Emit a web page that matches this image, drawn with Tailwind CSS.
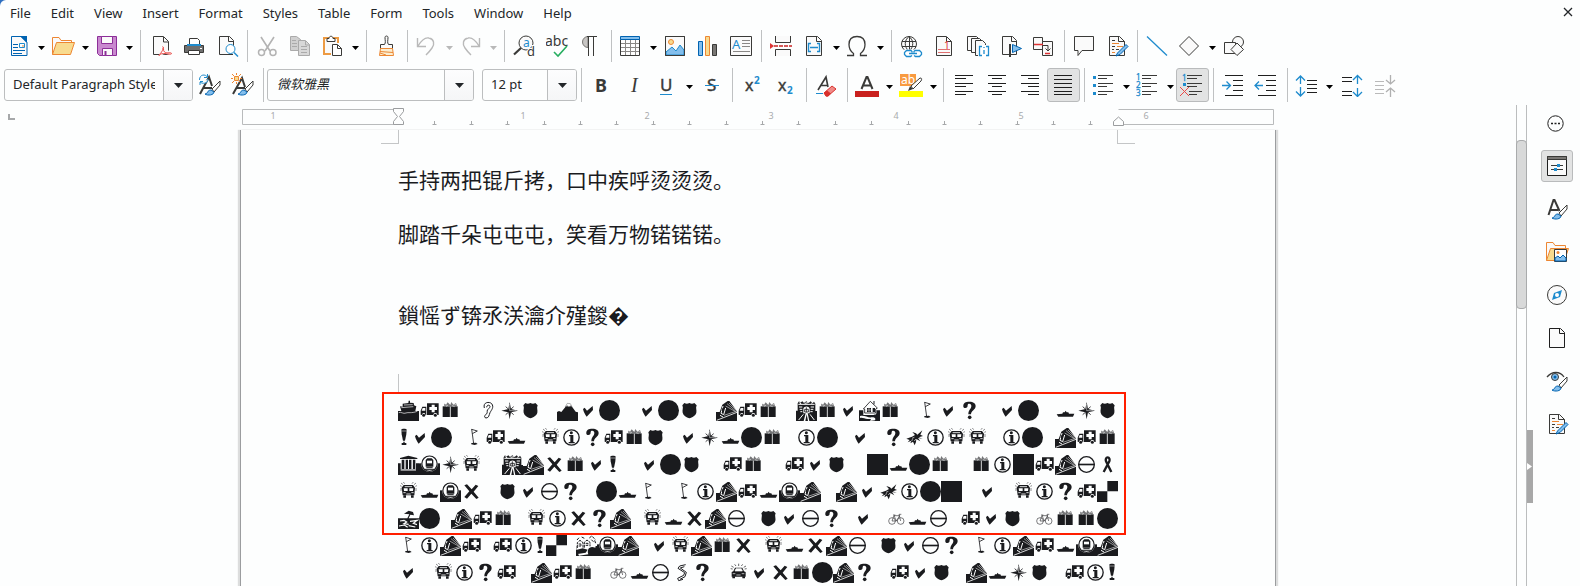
<!DOCTYPE html>
<html lang="en">
<head>
<meta charset="utf-8">
<title>Writer document</title>
<script src="https://cdn.jsdelivr.net/npm/@tailwindcss/browser@4"></script>
</head>
<body class="bg-[#2f6fc0] font-['Noto_Sans','Noto_Sans_CJK_SC',sans-serif] text-[13px] text-[#232629]">

<svg class="hidden" aria-hidden="true">
  <!-- toolbar icons, 24 x 24 -->
  <g fill="none" stroke="#3a3a38">
  <symbol id="i-new" viewBox="0 0 24 24"><path d="M4.500 2.500H14l6 6v13H4.500z" fill="#fafafa" stroke="#0063b1"/><path d="M13 2h7v7z" fill="#0063b1"/><path d="M6 10.500h5M6 13.500h5M6 16.500h12M6 19.500h9" stroke="#0063b1"/><path d="M12.500 9.500h5v4h-5z" fill="#fff" stroke="#1e8bcd"/><path d="M15 12h2" stroke="#ed8733"/></symbol>
  <symbol id="i-open" viewBox="0 0 24 24"><path d="M1.500 20.500V3.500H8l2 3h10.500v3" fill="#fafafa" stroke="#ed8733"/><path d="M5.500 8.500h18l-4 12h-18z" fill="#f8db8f" stroke="#ed8733"/></symbol>
  <symbol id="i-save" viewBox="0 0 24 24"><path d="M2.500 2.500h19v19h-17l-2-2z" fill="#c989cf" stroke="#8c2f98"/><path d="M6.500 2.500h11v7h-11zM7.500 14.500h10v7h-10z" fill="#fafafa" stroke="#8c2f98"/><path d="M10.500 17v4" stroke="#8c2f98" stroke-width="2"/></symbol>
  <symbol id="i-pdf" viewBox="0 0 24 24"><path d="M4.500 2.500h10l5 5v13H4.500z" fill="#fafafa" stroke="#3a3a38"/><path d="M14.500 3v5h5" stroke="#3a3a38" fill="none"/><path d="M13 12v2l2 4 7 1.500M14.500 17L11 22M13 19l7-1" stroke="#fff" stroke-width="3" fill="none"/><path d="M13.500 12.500c2 0 0 4 2 5.500s7 0 7 1.500-4 0-8 0-4 3-4.500 2 4-3 4-8" stroke="#e94a47" fill="none"/></symbol>
  <symbol id="i-print" viewBox="0 0 24 24"><path d="M2.500 11.500h19v7h-19z" fill="#6f6f6e" stroke="#3a3a38"/><path d="M7.500 4.500h8l2 2v5h-10z" fill="#fff" stroke="#3a3a38"/><path d="M5 11h14" stroke="#1e8bcd" stroke-width="2"/><path d="M6.500 16.500h11v4h-11z" fill="#fff" stroke="#3a3a38"/><path d="M18 14.500h2" stroke="#fff"/></symbol>
  <symbol id="i-preview" viewBox="0 0 24 24"><path d="M18 20.500H4.500v-18h10l4 4V12" fill="#fafafa" stroke="#3a3a38"/><path d="M13.500 3v4.500h5" stroke="#3a3a38" fill="none"/><circle cx="15.500" cy="15" r="4.500" fill="#fff" stroke="#1e8bcd"/><path d="M19 18.500l4 4" stroke="#1e8bcd" stroke-width="1.500"/></symbol>
  <symbol id="i-cut" viewBox="0 0 24 24"><path d="M6 3l9 14M19 3l-9 14" stroke="#b3b3b3" stroke-width="1.600"/><circle cx="6.500" cy="18.500" r="3" fill="none" stroke="#b3b3b3" stroke-width="1.500"/><circle cx="18" cy="18.500" r="3" fill="none" stroke="#b3b3b3" stroke-width="1.500"/></symbol>
  <symbol id="i-copy" viewBox="0 0 24 24"><path d="M2.500 2.500h6l4 3v11h-10z" fill="#d0d0d0" stroke="#aaa"/><path d="M10.500 6.500h7l4 4v11h-11z" fill="#d8d8d8" stroke="#aaa"/><path d="M4 6.500h4M4 9.500h5M4 12.500h5M13 12.500h6M13 15.500h6M13 18.500h6M17.500 7v4h4" stroke="#aaa" fill="none"/></symbol>
  <symbol id="i-paste" viewBox="0 0 24 24"><path d="M10 20H3V4h14v5" fill="#fafafa" stroke="#ed9b43" stroke-width="2"/><path d="M6 4.500h2c0-3 4-3 4 0h2v3H6z" fill="#fff" stroke="#3a3a38"/><path d="M11.500 10.500h5l4 4v7h-9z" fill="#fff" stroke="#3a3a38"/><path d="M16.500 11v3.500h4" stroke="#3a3a38" fill="none"/></symbol>
  <symbol id="i-brush" viewBox="0 0 24 24"><path d="M9.500 10.500c1.500-2 .5-4 .5-7 0-2 3-2 3 0 0 3-1 5 .5 7h4v4h-12v-4z" fill="#fafafa" stroke="#3a3a38"/><path d="M5.500 14.500h12l1 7h-14z" fill="#fbeed0" stroke="#ed8733"/><path d="M5 17.500l13 1M5 19l6 2" stroke="#ed8733"/></symbol>
  <symbol id="i-undo" viewBox="0 0 24 24"><path d="M2.500 4v8.500H11M3 12c3-5 7-9 11-8 5 1 6 6 3 10-2 3-4 5-6 7" stroke="#b9b9b9" stroke-width="1.400" fill="none"/></symbol>
  <symbol id="i-redo" viewBox="0 0 24 24"><path d="M20.500 4v8.500H12M20 12c-3-5-7-9-11-8-5 1-6 6-3 10 2 3 4 5 6 7" stroke="#b9b9b9" stroke-width="1.400" fill="none"/></symbol>
  <symbol id="i-find" viewBox="0 0 24 24"><circle cx="13" cy="9" r="7" fill="#fafafa" stroke="#3a3a38"/><path d="M8 14l-7 6.500" stroke="#3a3a38" stroke-width="2.200"/><text x="10" y="13" font-size="12" fill="#1e8bcd" stroke="none">a</text><text x="14" y="22" font-size="13" fill="#3a3a38" stroke="#fff" stroke-width="2" paint-order="stroke">d</text></symbol>
  <symbol id="i-spell" viewBox="0 0 24 24"><text x="-1" y="12" font-size="14" fill="#3a3a38" stroke="none">abc</text><path d="M8 18l4 4 9-10" stroke="#27ae60" stroke-width="1.600" fill="none"/></symbol>
  <symbol id="i-pilcrow" viewBox="0 0 24 24"><path d="M9 2.500a5 5 0 0 0 0 11z" fill="#c8c6c4" stroke="#797774"/><path d="M8 2.500h10M9.500 2v20M14.500 2v20" stroke="#3a3a38" fill="none"/></symbol>
  <symbol id="i-table" viewBox="0 0 24 24"><path d="M1.500 5.500h19v16h-19z" fill="#fff" stroke="#3a3a38"/><path d="M2 9.500h18M2 13.500h18M2 17.500h18M6.500 6v15M11.500 6v15M16.500 6v15" stroke="#8a8886" fill="none"/><path d="M1.500 2.500h19v3h-19z" fill="#83beec" stroke="#0063b1"/></symbol>
  <symbol id="i-image" viewBox="0 0 24 24"><path d="M2.500 2.500h19v19h-19z" fill="#fafafa" stroke="#3a3a38"/><circle cx="8" cy="8" r="2.500" fill="#f8db8f" stroke="#ed8733"/><path d="M3 21v-3l6-5 4 4 4-6 4 5v5z" fill="#83beec" stroke="#1e8bcd"/><path d="M2.500 2.500h19v19h-19z" fill="none" stroke="#3a3a38"/></symbol>
  <symbol id="i-chart" viewBox="0 0 24 24"><path d="M2.500 7.500h4v14h-4z" fill="#83beec" stroke="#0063b1"/><path d="M9.500 2.500h4v19h-4z" fill="#f8db8f" stroke="#ed8733"/><path d="M16.500 10.500h4v11h-4z" fill="#797774" stroke="#3a3a38"/></symbol>
  <symbol id="i-textbox" viewBox="0 0 24 24"><path d="M1.500 2.500h21v19h-21z" fill="#fafafa" stroke="#3a3a38"/><text x="3" y="15" font-size="13" fill="#1e8bcd" stroke="none">A</text><path d="M13 6.500h8M13 9.500h8M13 12.500h8M4 17.500h17" stroke="#8a8886"/></symbol>
  <symbol id="i-break" viewBox="0 0 24 24"><path d="M6.500 2v6.500h15V2M6.500 22v-6.500h15V22" fill="#fafafa" stroke="#3a3a38"/><path d="M1 9l4 3-4 3z" fill="#d33"/><path d="M5 12h18" stroke="#c92323" stroke-width="1.500" stroke-dasharray="4 1"/></symbol>
  <symbol id="i-field" viewBox="0 0 24 24"><path d="M4.500 2.500h11l4 4v15h-15z" fill="#fafafa" stroke="#3a3a38"/><path d="M14.500 3v4.500h5" stroke="#3a3a38" fill="none"/><path d="M9 9.500H6.500v8H9M15 9.500h2.500v8H15M8 13.500h8" stroke="#1e8bcd" stroke-width="1.400" fill="none"/></symbol>
  <symbol id="i-omega" viewBox="0 0 24 24"><path d="M1 21.500h6.500v-2C4 17 3 14 3 10.500c0-5 3-8 8-8s8 3 8 8c0 3.500-1 6.500-4.500 9v2H21" fill="none" stroke="#3a3a38" stroke-width="1.300"/></symbol>
  <symbol id="i-link" viewBox="0 0 24 24"><circle cx="9" cy="10" r="7.500" fill="#fafafa" stroke="#3a3a38"/><path d="M2 7.500h14M2 12.500h14M9.500 2v15M9 2.500c-5 4-5 10 0 15M9 2.500c5 4 5 10 0 15" fill="none" stroke="#3a3a38"/><path d="M4 15.500h18v8H4z" fill="#fff"/><path d="M12 18.500v-1l-1-1H6.500l-2 2v2l2 2h4l1.500-1M14 18.500v-1l1-1h4.500l2 2v2l-2 2h-4l-1.500-1M9 19.500h8" fill="none" stroke="#1e8bcd" stroke-width="1.300"/></symbol>
  <symbol id="i-footnote" viewBox="0 0 24 24"><path d="M3.500 2.500h10l5 5v14h-15z" fill="#fafafa" stroke="#3a3a38"/><path d="M13.500 3v4.500h5" fill="none" stroke="#3a3a38"/><path d="M5 15.500h12M5 18.500h12" stroke="#e07070"/><text x="11" y="15" font-size="10" fill="#d33" stroke="none">1</text></symbol>
  <symbol id="i-index" viewBox="0 0 24 24"><path d="M1.500 2.500h9l3 3v11h-12z" fill="#fafafa" stroke="#3a3a38"/><path d="M5.500 4.500h8l3 3v11h-11z" fill="#fafafa" stroke="#3a3a38"/><path d="M9.500 6.500h7l3 3v12h-10z" fill="#fafafa" stroke="#3a3a38"/><path d="M12 11h12v12H12z" fill="#fff"/><path d="M16 12.500h-2.500v9H16M20 12.500h2.500v9H20M18 13v1M18 16v4" fill="none" stroke="#1e8bcd" stroke-width="1.300"/></symbol>
  <symbol id="i-bookmark" viewBox="0 0 24 24"><path d="M3.500 2.500h10l4 4v14h-14z" fill="#fafafa" stroke="#3a3a38"/><path d="M12.500 3v4.500h5" fill="none" stroke="#3a3a38"/><path d="M11 10v13" stroke="#3a3a38" stroke-width="2"/><path d="M13.500 10.500l9 4-9 4z" fill="#83beec" stroke="#0063b1"/></symbol>
  <symbol id="i-xref" viewBox="0 0 24 24"><path d="M1.500 3.500h9v12h-9z" fill="#fafafa" stroke="#3a3a38"/><path d="M10.500 7.500h10v14h-10z" fill="#fafafa" stroke="#3a3a38"/><path d="M2 10.500h9M13 19.500h5" stroke="#d33" stroke-width="1.500"/><path d="M11 11.500h5v5M13.500 14.500l2.500 2.500 2.500-2.500" fill="none" stroke="#3a3a38"/></symbol>
  <symbol id="i-comment" viewBox="0 0 24 24"><path d="M2.500 2.500h19v14H10l-4 5v-5H2.500z" fill="#fafafa" stroke="#3a3a38"/></symbol>
  <symbol id="i-track" viewBox="0 0 24 24"><path d="M4.500 2.500h10l5 5v14h-15z" fill="#fafafa" stroke="#3a3a38"/><path d="M13.500 3v4.500h6" fill="none" stroke="#3a3a38"/><path d="M7 6.500h3M7 12.500h3M11 15.500h3M7 15.500h2" stroke="#3a3a38"/><path d="M7 9.500h7M12 12.500h6M7 18.500h3" stroke="#ed8733"/><path d="M21 10.500l2 2-8 8-4 1.500 1.500-3z" fill="#83beec" stroke="#0063b1"/></symbol>
  <symbol id="i-line" viewBox="0 0 24 24"><path d="M2 2.500l20 19" stroke="#1e8bcd" stroke-width="1.300"/></symbol>
  <symbol id="i-diamond" viewBox="0 0 24 24"><path d="M11 2.500l9.500 9.500-9.500 9.500L1.500 12z" fill="#fafafa" stroke="#3a3a38"/></symbol>
  <symbol id="i-shapes" viewBox="0 0 24 24"><circle cx="16" cy="8" r="5.500" fill="#fafafa" stroke="#3a3a38"/><path d="M2.500 8.500h11v11h-11z" fill="#fafafa" stroke="#3a3a38"/><path d="M15 9l6.500 6.500L15 21.500l-6-6z" fill="#fafafa" stroke="#3a3a38"/></symbol>
  <!-- second toolbar -->
  <symbol id="i-styupd" viewBox="0 0 24 24"><path d="M2 21L11 4l3 9M5 15h9" stroke="#3a3a38" stroke-width="2" fill="none"/><path d="M1.500 7c0-6 6-6 8-3V1M9.500 4.500H6M10 6c0 5-6 5-8 3v3M2 8.500h3" stroke="#1e8bcd" fill="#fff"/><path d="M14 16l8-8v4l-6 7z" fill="#fff" stroke="#3a3a38"/><path d="M13 17c-4 0-3 4-6 4 3 2 9 1 9-2z" fill="#83beec" stroke="#0063b1"/></symbol>
  <symbol id="i-stynew" viewBox="0 0 24 24"><path d="M2 21L11 5l3 9M5 15h9" stroke="#3a3a38" stroke-width="2" fill="none"/><path d="M3.500 3.500h4v4h-4z" fill="#f8db8f" stroke="#ed8733"/><path d="M1 1l2 2M10 1L8 3M1 10l2-2M10 10L8 8M5.500 0v2M5.500 9v2M0 5.500h2M9 5.500h2" stroke="#ed8733"/><path d="M14 16l8-8v4l-6 7z" fill="#fff" stroke="#3a3a38"/><path d="M13 17c-4 0-3 4-6 4 3 2 9 1 9-2z" fill="#83beec" stroke="#0063b1"/></symbol>
  <symbol id="i-bold" viewBox="0 0 24 24"><text x="6" y="19" font-size="18" font-weight="700" fill="#3a3a38" stroke="none">B</text></symbol>
  <symbol id="i-italic" viewBox="0 0 24 24"><text x="9" y="19" font-size="20" font-style="italic" font-family="Liberation Serif" fill="#3a3a38" stroke="none">I</text></symbol>
  <symbol id="i-under" viewBox="0 0 24 24"><text x="5" y="18" font-size="17" fill="#3a3a38" stroke="#3a3a38" stroke-width=".4">U</text><path d="M5 21.500h12" stroke="#1e8bcd"/></symbol>
  <symbol id="i-strike" viewBox="0 0 24 24"><text x="8" y="18" font-size="17" fill="#3a3a38" stroke="#3a3a38" stroke-width=".4">S</text><path d="M6 12.500h14" stroke="#1e8bcd"/></symbol>
  <symbol id="i-sup" viewBox="0 0 24 24"><text x="5" y="18" font-size="16" fill="#3a3a38" stroke="#3a3a38" stroke-width=".4">x</text><text x="14" y="11" font-size="10" font-weight="700" fill="#1e8bcd" stroke="none">2</text></symbol>
  <symbol id="i-sub" viewBox="0 0 24 24"><text x="5" y="18" font-size="16" fill="#3a3a38" stroke="#3a3a38" stroke-width=".4">x</text><text x="14" y="21" font-size="10" font-weight="700" fill="#1e8bcd" stroke="none">2</text></symbol>
  <symbol id="i-clear" viewBox="0 0 24 24"><path d="M4 17L12 4l2 10M7 12.500h7" stroke="#3a3a38" stroke-width="1.600" fill="none"/><path d="M2 20.500h7" stroke="#1e8bcd"/><path d="M10 20l8-7 4 3-8 7h-2z" fill="#f08b88" stroke="#d9302c"/><path d="M10 20l3-2.500 4 3-3 3h-2z" fill="#d9302c"/></symbol>
  <symbol id="i-color" viewBox="0 0 24 24"><path d="M6.500 16L11.500 4h1L17.500 16M8 12.500h8" stroke="#3a3a38" stroke-width="2" fill="none"/><path d="M0 18h24v6H0z" fill="#c9211e"/></symbol>
  <symbol id="i-high" viewBox="0 0 24 24"><path d="M1 1h16v12H1z" fill="#f89a40"/><text x="2" y="11" font-size="12" fill="#fff" stroke="none">ab</text><path d="M12 13l9-8c2 0 2 1 1 3l-8 8z" fill="#fff" stroke="#3a3a38"/><path d="M11 13l3 3-5 2z" fill="#3a3a38"/><path d="M0 18h24v6H0z" fill="#ff0"/></symbol>
  <symbol id="i-left" viewBox="0 0 24 24"><path d="M3 2.500h18M3 5.500h11M3 10.500h18M3 13.500h11M3 18.500h18M3 21.500h11" stroke="#1f1f1f"/></symbol>
  <symbol id="i-center" viewBox="0 0 24 24"><path d="M3 2.500h18M7 5.500h10M3 10.500h18M7 13.500h10M3 18.500h18M7 21.500h10" stroke="#1f1f1f"/></symbol>
  <symbol id="i-right" viewBox="0 0 24 24"><path d="M3 2.500h18M10 5.500h11M3 10.500h18M10 13.500h11M3 18.500h18M10 21.500h11" stroke="#1f1f1f"/></symbol>
  <symbol id="i-just" viewBox="0 0 24 24"><path d="M3 2.500h18M3 6.500h18M3 10.500h18M3 14.500h18M3 18.500h18M3 21.500h18" stroke="#1f1f1f"/></symbol>
  <symbol id="i-bullet" viewBox="0 0 24 24"><path d="M6 2.500h15M6 5.500h9M6 10.500h15M6 13.500h9M6 18.500h15M6 21.500h9" stroke="#3a3a38"/><path d="M1 3h3v3H1zM1 11h3v3H1zM1 19h3v3H1z" fill="#1e8bcd"/></symbol>
  <symbol id="i-number" viewBox="0 0 24 24"><path d="M6 2.500h15M6 5.500h9M6 10.500h15M6 13.500h9M6 18.500h15M6 21.500h9" stroke="#3a3a38"/><g font-size="8" fill="#1e8bcd" stroke="#1e8bcd" stroke-width=".3"><text x="0" y="7">1</text><text x="0" y="15">2</text><text x="0" y="23">3</text></g></symbol>
  <symbol id="i-nolist" viewBox="0 0 24 24"><path d="M7 2.500h15M7 5.500h10M7 10.500h15M7 13.500h10M9 18.500h13M9 21.500h8" stroke="#3a3a38"/><text x="2" y="8" font-size="8" fill="#1e8bcd" stroke="#1e8bcd" stroke-width=".3">1</text><path d="M3 10h3v3H3z" fill="#1e8bcd"/><path d="M0 14l9 9M9 14l-9 9" stroke="#e94a47"/></symbol>
  <symbol id="i-inc" viewBox="0 0 24 24"><path d="M4 2.500h18M12 7.500h10M12 12.500h10M12 17.500h10M4 22.500h18" stroke="#1f1f1f"/><path d="M1 12.500h8M5.500 8.500l4 4-4 4" fill="none" stroke="#1e8bcd" stroke-width="1.300"/></symbol>
  <symbol id="i-dec" viewBox="0 0 24 24"><path d="M4 2.500h18M12 7.500h10M12 12.500h10M12 17.500h10M4 22.500h18" stroke="#1f1f1f"/><path d="M1 12.500h8M5 8.500l-4 4 4 4" fill="none" stroke="#1e8bcd" stroke-width="1.300"/></symbol>
  <symbol id="i-lines" viewBox="0 0 24 24"><path d="M12 7.500h10M12 11.500h10M12 15.500h10M12 19.500h10" stroke="#1f1f1f"/><path d="M5.500 3v8M1 7.500L5.500 3 10 7.500M5.500 14v9M1 18.500L5.500 23l4.500-4.500" fill="none" stroke="#1e8bcd" stroke-width="1.300"/></symbol>
  <symbol id="i-pinc" viewBox="0 0 24 24"><path d="M3 4.500h10M3 8.500h10M3 18.500h10M3 22.500h10" stroke="#1f1f1f"/><path d="M18.500 3v8M14 7l4.500-4.500L23 7M18.500 15v8M14 19l4.500 4.500L23 19" fill="none" stroke="#1e8bcd" stroke-width="1.300"/></symbol>
  <symbol id="i-pdec" viewBox="0 0 24 24"><path d="M3 8.500h9M3 12.500h9M3 16.500h9M3 20.500h9" stroke="#b9b9b9"/><path d="M18.500 2v9M14 7l4.500 4 4.500-4M18.500 15v9M14 19l4.500-4 4.500 4" fill="none" stroke="#b0b0b0" stroke-width="1.300"/></symbol>
  <!-- sidebar -->
  <symbol id="i-more" viewBox="0 0 24 24"><circle cx="10.500" cy="12.500" r="7.700" fill="none" stroke="#1f1f1f"/><path d="M6 12.500h2M9.500 12.500h2M13 12.500h2" stroke="#1f1f1f" stroke-width="1.600"/></symbol>
  <symbol id="i-props" viewBox="0 0 24 24"><path d="M2.500 2.500h19v19h-19z" fill="#fafafa" stroke="#1f1f1f"/><path d="M2.500 2.500h19v3h-19z" fill="#797774" stroke="#3a3a38"/><path d="M6 11.500h12M6 15.500h12" stroke="#3a3a38"/><path d="M12 10h3v3h-3zM9 14h3v3H9z" fill="#1e8bcd"/></symbol>
  <symbol id="i-styles" viewBox="0 0 24 24"><path d="M3.500 18L8.500 3h1l5 11M5 13h8" stroke="#3a3a38" stroke-width="2" fill="none"/><path d="M14 16l8-8v4l-6 7z" fill="#fff" stroke="#3a3a38"/><path d="M13 17c-4 0-3 4-6 4 3 2 9 1 9-2z" fill="#83beec" stroke="#0063b1"/></symbol>
  <symbol id="i-gallery" viewBox="0 0 24 24"><path d="M1.500 20.500V2.500H8l2 3h10.500v3" fill="#fafafa" stroke="#ed8733"/><path d="M5.500 8.500h18l-4 12h-18z" fill="#f8db8f" stroke="#ed8733"/><path d="M9.500 9.500h12v12h-12z" fill="#fff" stroke="#3a3a38"/><circle cx="13" cy="12.500" r="1.500" fill="#ed8733"/><path d="M10 21v-3l3-2 2 2 3-3 3 3v3z" fill="#83beec" stroke="#0063b1"/></symbol>
  <symbol id="i-nav" viewBox="0 0 24 24"><circle cx="12" cy="12" r="9.500" fill="#fafafa" stroke="#3a3a38"/><path d="M17 7l-2 7-8 3 2-7z" fill="#1e8bcd"/><circle cx="12" cy="12" r="2" fill="#fff"/></symbol>
  <symbol id="i-page" viewBox="0 0 24 24"><path d="M4.500 2.500h11l4 4v15h-15z" fill="#fafafa" stroke="#1f1f1f"/><path d="M14.500 3v4.500h5" fill="none" stroke="#1f1f1f"/></symbol>
  <symbol id="i-inspect" viewBox="0 0 24 24"><path d="M2 8c5-6 13-6 17 0" fill="none" stroke="#3a3a38" stroke-width="1.300"/><circle cx="10" cy="8" r="3.500" fill="#83beec" stroke="#3a3a38"/><circle cx="10" cy="8" r="1.500" fill="#0063b1"/><path d="M14 16l8-8v4l-6 7z" fill="#fff" stroke="#3a3a38"/><path d="M13 17c-4 0-3 4-6 4 3 2 9 1 9-2z" fill="#83beec" stroke="#0063b1"/></symbol>
  </g>

  <!-- symbol-font pictographs, 63 x 63 -->
  <symbol id="g-circle" viewBox="0 0 63 63"><circle cx="31.500" cy="31.500" r="31.500"/></symbol>
  <symbol id="g-square" viewBox="0 0 63 63"><path d="M0 0h63v63H0z"/></symbol>
  <symbol id="g-checker" viewBox="0 0 63 63"><path d="M0 31h31v32H0zM31 0h32v31H31z"/></symbol>
  <symbol id="g-check" viewBox="0 0 63 63"><path d="M15 27l5-4 7 9 17-14 1 12-19 20c-5-7-9-14-11-23z"/></symbol>
  <symbol id="g-ques" viewBox="0 0 63 63"><path d="M13 20C12 8 20 5 31 5c12 0 19 5 19 13 0 12-14 13-14 25h-8c0-15 9-15 9-25 0-4-2-7-6-7-7 0-4 6-6 10-3 4-11 4-12-1z"/><circle cx="32" cy="52" r="5.500"/></symbol>
  <symbol id="g-excl" viewBox="0 0 36 63"><path d="M10 8c0-4 16-4 16 0l-1 14-4 19h-6l-4-19z"/><path d="M16 44h4v4h5v6H11v-6h5z"/><path d="M10 12h16" stroke="#fdfefe" stroke-width="1.500"/></symbol>
  <symbol id="g-x" viewBox="0 0 63 63"><path d="M10 13l8-3 14 15L44 11l8 4-14 17 15 18-7 4-15-16-13 15-8-5 15-17z"/></symbol>
  <symbol id="g-info" viewBox="0 0 63 63"><circle cx="31.500" cy="31.500" r="23" fill="none" stroke="currentColor" stroke-width="4"/><circle cx="31" cy="17" r="4.500"/><path d="M24 24h13v21h4v4H23v-4h5V28h-4z"/></symbol>
  <symbol id="g-noentry" viewBox="0 0 63 63"><circle cx="31.500" cy="31.500" r="23.500" fill="none" stroke="currentColor" stroke-width="4"/><path d="M8 29h47v5H8z"/></symbol>
  <symbol id="g-star" viewBox="0 0 63 63"><path d="M32 6l4 21 21 5-21 5-4 21-4-21-21-5 21-5z"/><path d="M32 32V12M32 32h20" stroke="#fdfefe" stroke-width="1.500"/><path d="M20 20l8 7M44 20l-8 7M20 44l8-7M44 44l-8-7" stroke="currentColor" stroke-width="2.500"/></symbol>
  <symbol id="g-shield" viewBox="0 0 63 63"><path d="M10 16l6-7c5 3 10 3 15 0 6 3 10 3 15 0l7 7c-4 8 1 14-1 22-2 9-12 14-21 17C22 52 13 47 11 38 9 30 14 24 10 16z"/></symbol>
  <symbol id="g-boat" viewBox="0 0 63 63"><path d="M5 43l17-2 2-4h5l3-5 3 5h5l2 4h16l-4 9H10z"/></symbol>
  <symbol id="g-gift" viewBox="0 0 63 63"><path d="M8 19h45v32H8z"/><path d="M13 18l-1-7 7 2 4-6 8 8 3-9 6 8 8-5 3 9z" opacity=".6"/><path d="M31 20v32" stroke="#fdfefe" stroke-width="2.500"/><path d="M18 19l6-3M36 17l8 3M14 14l6 1M43 14l5 0" stroke="#fdfefe" stroke-width="1.500"/></symbol>
  <symbol id="g-amb" viewBox="0 0 63 63"><path d="M24 10h35v35h-4c-1-8-11-8-12 0H24zM5 44V32l5-12h12v25h-3c0-8-9-8-10 0z"/><path d="M11 24h8v8H8z" fill="#fdfefe"/><path d="M38 14h9v7h7v9h-7v7h-9v-7h-7v-9h7z" fill="#fdfefe"/><circle cx="14" cy="46" r="4.500"/><circle cx="49" cy="46" r="4.500"/></symbol>
  <symbol id="g-ship" viewBox="0 0 63 63"><path d="M0 33h10L6 19l8 1v-9l17-2 1-7h4v6l11 1 1 7 7 3-3 14h11v30H0z"/><path d="M2 38c7-4 14 5 22 1 8-3 14 2 34-5M10 23l36-3M18 15l26-1" stroke="#fdfefe" stroke-width="2" fill="none"/></symbol>
  <symbol id="g-ear" viewBox="0 0 63 63"><path d="M19 24c-5-18 15-20 22-13 8 11-1 19-5 27-3 7-3 16-12 16-6-1-5-8-1-10 6-3 4-8 5-13M26 22c0-8 9-8 10-3 0 6-7 7-8 13" fill="none" stroke="currentColor" stroke-width="3"/></symbol>
  <symbol id="g-mount" viewBox="0 0 63 63"><path d="M0 36l6-3 7 3 14-17h17l12 16 7 2v26H0z"/><path d="M25 20l6-10 9 1 5 9-5-3-4 4-5-4z" fill="#fdfefe" stroke="currentColor"/></symbol>
  <symbol id="g-train" viewBox="0 0 63 63"><path d="M0 36h11l8-22L35 3h5l23 31v29H0z"/><path d="M2 61l61-24V23" stroke="#fdfefe" stroke-width="2.500" fill="none"/><path d="M24 46l36-12M39 9l21 21M33 11l26 22M29 18l28 16" stroke="#fdfefe" stroke-width="1.600" fill="none"/><path d="M21 18l-6 22 8 4 6-20M12 46l9 5" stroke="#fdfefe" stroke-width="3" fill="none"/><path d="M22 24l-3 9" stroke="currentColor" stroke-width="5"/></symbol>
  <symbol id="g-castle" viewBox="0 0 63 63"><path d="M0 32h5V10l4-6 4 4 6-4 5 5 7-5 7 5 6-5 5 5 5-4 4 6v22h5v31H0z"/><path d="M7 13h49M9 21h10M44 21h10M11 28h8M44 28h8M13 35h6M43 35h7M10 8l6 4M46 10l6-3M26 10l10-2" stroke="#fdfefe" stroke-width="3" fill="none"/><path d="M22 40V26c2-9 17-9 19 0v14h-6l5 23h-4l-4-20-4 20h-5l6-23z" fill="#fdfefe"/><path d="M26 28h11v8H26zM31 22v15" fill="none" stroke="currentColor" stroke-width="2.500"/><path d="M8 60l14-17M55 60L42 43" stroke="#fdfefe" stroke-width="3"/></symbol>
  <symbol id="g-house" viewBox="0 0 63 63"><path d="M0 31h13v14h30c10 0 10-4 9-14h11v32H0z"/><path d="M13 27L34 4l21 20-5 3v12H17V27z" fill="#fdfefe" stroke="currentColor" stroke-width="2.500"/><path d="M45 3v10" stroke="currentColor" stroke-width="3"/><path d="M24 24h12v12H24zM41 24h7v12h-7z"/><path d="M30 24v12M24 30h12" stroke="#fdfefe" stroke-width="1.500"/><path d="M3 48c12-4 24 6 35 4 6-2 14 2 10 9l-16 2c8-6 2-7-6-6C16 57 12 52 3 54z" fill="#fdfefe"/></symbol>
  <symbol id="g-golf" viewBox="0 0 63 63"><path d="M23 7l17 5-15 8M23 6l6 44" fill="none" stroke="currentColor" stroke-width="2.500"/><path d="M22 48l14-1 5 4-9 3-10-2z"/></symbol>
  <symbol id="g-bus" viewBox="0 0 63 63"><path d="M17 12h28l6 8-2 23H14l-3-23z"/><path d="M17 22h12v8H18zM34 22h12l-1 8H34z" fill="#fdfefe"/><path d="M20 17h22M16 35h7M40 35h7M25 39h13" stroke="#fdfefe" stroke-width="2.500"/><path d="M16 43h8v7h-8zM39 43h8v7h-8z"/><path d="M9 6l6 5M16 3l4 5M42 8l4-5M48 11l6-5M6 14l5 2M57 14l-5 2M9 21v9M54 21v9" stroke="currentColor" stroke-width="1.500"/></symbol>
  <symbol id="g-bee" viewBox="0 0 63 63"><path d="M7 35l17-6 9-5-8-9 11 4 4 4L55 10l-6 13 8 4-13 4 12 4-14-2 7 10-12-7-1 9-4 10-5-11-8 5 3-8-11 5 6-7z"/><path d="M24 34l7-3M31 42l5-6M22 40l5-2" stroke="#fdfefe" stroke-width="2"/></symbol>
  <symbol id="g-museum" viewBox="0 0 63 63"><path d="M0 28h8v18h46V28h9v35H0zM6 12L31 5l27 7v3H6z"/><path d="M11 17h9v28h-9zM22 17h8v28h-8zM33 17h8v28h-8zM44 17h8v28h-8z"/><path d="M8 48h46" stroke="#fdfefe" stroke-width="3"/><path d="M21 17v28M31.500 17v28M42.500 17v28" stroke="#fdfefe" stroke-width="3"/></symbol>
  <symbol id="g-metro" viewBox="0 0 63 63"><path d="M0 28h63v35H0z"/><circle cx="31.500" cy="29" r="25" fill="#fdfefe"/><circle cx="31.500" cy="29" r="23" fill="none" stroke="currentColor" stroke-width="3.500"/><path d="M20 18l5-5h13l5 5v20H20z"/><path d="M24 20h15v8H24z" fill="#fdfefe"/><path d="M22 41h19M17 46h29" stroke="currentColor" stroke-width="3"/></symbol>
  <symbol id="g-ribbon" viewBox="0 0 63 63"><path d="M20 54l17-32c2-5 0-12-5-12s-7 7-5 12l16 32" fill="none" stroke="currentColor" stroke-width="7"/></symbol>
  <symbol id="g-beach" viewBox="0 0 63 63"><path d="M0 31h28l6-12-16-2 14-9 13 4 3 10-11-2-5 11h31v32H0z"/><path d="M6 39l12-2 8 5-8 5 14 2M36 40l22-3-12 9 11 4M3 54l16-3 10 7M32 53l20 4" stroke="#fdfefe" stroke-width="3.500" fill="none"/></symbol>
  <symbol id="g-bike" viewBox="0 0 63 63"><g fill="none" stroke="currentColor" stroke-width="1.700"><circle cx="18" cy="39" r="10"/><circle cx="44" cy="39" r="10"/><path d="M18 39l6-16h17L31 39zM24 23l7 16M44 39l-5-20h7M21 21h7"/></g></symbol>
  <symbol id="g-homes" viewBox="0 0 63 63"><path d="M0 33h63v30H0z"/><path d="M1 45V23l6-13 12-7 12 8 10-8 14 4 6 13-3 18c-18-8-26 6-21 20l-28 4z" fill="#fdfefe"/><path d="M4 39V23l8-7 9 7v16M25 38V22l8-7 9 7v12M8 27h7v6H8M29 25h7v6h-7M3 15l7-8M17 6l8 4M40 9l7-6M49 5l9 8M56 16l3 9M46 14l8 8" fill="none" stroke="currentColor" stroke-width="3" stroke-dasharray="9 2"/><path d="M0 45l20-5 15 4-6 9-29 5z"/></symbol>
  <symbol id="g-snake" viewBox="0 0 63 63"><path d="M44 8L26 12l-5 7 20 13-3 8-18 9 3 7 13-4M40 14l-12 4 18 13-4 13-15 8" fill="none" stroke="currentColor" stroke-width="3"/></symbol>
  <symbol id="g-car" viewBox="0 0 63 63"><path d="M11 30l5-2 5-11h22l5 11 5 2v14H11z"/><path d="M24 20h16l3 7H21zM14 35h8M41 35h8M25 39h13" fill="#fdfefe" stroke="#fdfefe" stroke-width="2"/><path d="M13 43h8v6h-8zM43 43h8v6h-8z"/><path d="M10 12l7 4M20 7l4 5M32 5v7M44 7l-4 5M54 12l-7 4M8 20l6 1M56 20l-6 1" stroke="currentColor" stroke-width="2"/></symbol>
</svg>

<div class="flex min-h-screen flex-col rounded-tl-md bg-[#fdfefe]">
  <header>
    <nav class="flex h-[30px] items-center justify-between pr-1.5" aria-label="Menu bar">
      <div id="menus" class="flex pb-[3px]"></div>
      <button aria-label="Close document" class="mb-1.5 flex size-3 items-center justify-center"><svg class="size-3" viewBox="0 0 12 12"><path d="M2 2l8 8M10 2l-8 8" stroke="#232629" stroke-width="1.300"/></svg></button>
    </nav>
    <div id="bar1" role="toolbar" aria-label="Standard" class="flex h-8 items-stretch pl-[3px]"></div>
    <div class="mt-1.5 flex h-[34px] items-stretch pl-1">
      <div class="my-px flex w-[189px] overflow-hidden rounded-[3px] border border-[#bcbebf]">
        <input aria-label="Paragraph style" value="Default Paragraph Style" class="mr-2 w-0 flex-1 bg-transparent pl-2 text-[13px]">
        <button aria-label="Paragraph styles" class="flex w-[29px] items-center justify-center border-l border-[#bcbebf] bg-linear-to-b from-[#fdfdfe] to-[#f5f6f7]"><svg class="h-[5px] w-[9px]" viewBox="0 0 9 5"><path d="M0 0h9L4.500 5z" fill="#232629"/></svg></button>
      </div>
      <div id="bar2a" role="toolbar" aria-label="Style actions" class="ml-px flex"></div>
      <div class="my-px flex w-[207px] overflow-hidden rounded-[3px] border border-[#bcbebf]">
        <input aria-label="Font name" value="微软雅黑" class="w-0 flex-1 bg-transparent pl-[9px] text-[13px] italic">
        <button aria-label="Fonts" class="flex w-[29px] items-center justify-center border-l border-[#bcbebf] bg-linear-to-b from-[#fdfdfe] to-[#f5f6f7]"><svg class="h-[5px] w-[9px]" viewBox="0 0 9 5"><path d="M0 0h9L4.500 5z" fill="#232629"/></svg></button>
      </div>
      <div class="my-px ml-2 flex w-[95px] overflow-hidden rounded-[3px] border border-[#bcbebf]">
        <input aria-label="Font size" value="12 pt" class="w-0 flex-1 bg-transparent pl-2 text-[13px]">
        <button aria-label="Font sizes" class="flex w-[29px] items-center justify-center border-l border-[#bcbebf] bg-linear-to-b from-[#fdfdfe] to-[#f5f6f7]"><svg class="h-[5px] w-[9px]" viewBox="0 0 9 5"><path d="M0 0h9L4.500 5z" fill="#232629"/></svg></button>
      </div>
      <div id="bar2b" role="toolbar" aria-label="Formatting" class="flex"></div>
    </div>
  </header>

  <div class="mt-[3px] flex flex-1">
    <main class="relative min-w-0 flex-1">
      <svg class="absolute top-2 left-2 size-[7px]" viewBox="0 0 7 7" aria-hidden="true"><path d="M1 1v5h6" fill="none" stroke="#a6a8aa" stroke-width="2"/></svg>
      <svg id="ruler" class="mx-auto block h-[25px] w-[1036px]" viewBox="0 0 1036 25" role="img" aria-label="Ruler"></svg>
      <article class="mx-auto h-[456px] w-[1036px] overflow-hidden border-x border-[#9b9d9f] shadow-[-2px_0_1px_#dcdddd,2px_0_1px_#dcdddd]">
        <div class="flex justify-between px-[140px]" aria-hidden="true">
          <div class="h-3.5 w-[18px] border-r border-b border-[#c4c6c7]"></div>
          <div class="h-3.5 w-[18px] border-b border-l border-[#c4c6c7]"></div>
        </div>
        <div class="px-[157px] font-['Noto_Sans_CJK_SC',sans-serif] text-[21px] leading-[27px] text-[#1a1b1e]">
          <p class="mt-[22px]">手持两把锟斤拷，口中疾呼烫烫烫。</p>
          <p class="mt-[27px]">脚踏千朵屯屯屯，笑看万物锘锘锘。</p>
          <p class="mt-[54px]">鎻愮ず锛氶浂瀹介殣鍐�</p>
          <div class="mt-[46px] h-[18px] border-l border-[#c4c6c7]" aria-hidden="true"></div>
          <div id="boxed" class="-mr-2 -ml-4 border-2 border-[#ff1e00] pt-[3px] pr-1.5 pb-px pl-3.5"></div>
          <div id="rest" class="-mt-[3px]"></div>
        </div>
      </article>
    </main>
    <div class="relative w-[11px] border-x border-[#bbbdbe]" role="scrollbar" aria-label="Vertical scroll" aria-controls="boxed" aria-valuenow="10">
      <div class="-mx-px mt-[35px] h-[169px] rounded-[4px] border border-[#a9abac] bg-[#d8d9d9]"></div>
    </div>
    <aside class="flex w-[53px]">
      <button aria-label="Hide sidebar" class="mt-[325px] flex h-[73px] w-1.5 items-center bg-[#a8a8a8]"><svg class="h-[7px] w-[5px]" viewBox="0 0 5 7"><path d="M0 0l5 3.500L0 7z" fill="#fff"/></svg></button>
      <div id="side" role="toolbar" aria-label="Sidebar decks" class="ml-2 flex flex-col gap-[11px] pt-0.5"></div>
    </aside>
  </div>
</div>

<script>
  const el = (id) => document.getElementById(id);
  el('menus').innerHTML = ['File','Edit','View','Insert','Format','Styles','Table','Form','Tools','Window','Help']
    .map(m => `<button class="px-2.5">${m}</button>`).join('');

  // "|" separator, "v" drop-down arrow (V disabled), "*" prefix pressed
  function bar(items, narrow, broad) {
    return items.split(' ').map((t, i, all) => {
      if (t === '|') {
        const wide = i && all[i - 1].toLowerCase() === 'v';
        return `<div class="${wide ? broad : narrow} flex justify-center"><div class="w-px bg-[#bfc1c2]"></div></div>`;
      }
      if (t === 'v') return `<button aria-label="More options" class="flex w-[11px] items-center justify-center pt-1"><svg class="h-1 w-[7px]" viewBox="0 0 7 4"><path d="M0 0h7L3.500 4z" fill="#000"/></svg></button>`;
      if (t === 'V') return `<button disabled aria-label="More options" class="flex w-[11px] items-center justify-center pt-1"><svg class="h-1 w-[7px]" viewBox="0 0 7 4"><path d="M0 0h7L3.500 4z" fill="#b9b9b9"/></svg></button>`;
      const on = t[0] === '*';
      const n = on ? t.slice(1) : t;
      const cls = on ? 'flex w-[33px] items-center rounded-[3px] border border-[#b9bbbc] bg-[#e2e3e3] pl-[3px]' : 'flex w-[33px] items-center pl-1';
      return `<button aria-label="${n}" class="${cls}"><svg class="size-6 shrink-0"><use href="#i-${n}"/></svg></button>`;
    }).join('');
  }
  el('bar1').innerHTML = bar('new v open v save v | pdf print preview | cut copy paste v | brush | undo V redo V | find spell pilcrow | table v image chart textbox | break field v omega v | link footnote index bookmark xref | comment track | line diamond v shapes', 'w-[7px]', 'w-2.5');
  el('bar2a').innerHTML = bar('styupd stynew |', 'w-[7px]', 'w-2.5');
  el('bar2b').innerHTML = bar('| bold italic under v strike | sup sub | clear | color v high v | left center right *just | bullet v number v *nolist | inc dec | lines v pinc pdec', 'w-2', 'w-[9px]');

  el('side').innerHTML = ['more','*props','styles','gallery','nav','page','inspect','track'].map(t => {
    const on = t[0] === '*';
    const n = on ? t.slice(1) : t;
    const cls = on ? 'flex size-8 items-center justify-center rounded-[3px] border border-[#b9bbbc] bg-[#e2e3e3]' : 'flex size-8 items-center justify-center';
    return `<button aria-label="${n}" class="${cls}"><svg class="size-6 shrink-0"><use href="#i-${n}"/></svg></button>`;
  }).join('');

  // ruler: margins framed, evenly spaced ticks, numbers on whole units
  let r = '<g fill="none" stroke="#b9bbbc"><path d="M158.500 4.500H2.500v15h156M878.500 4.500h155v15h-155"/></g>';
  for (let i = 1; i < 20; i++) {
    const x = Math.round(158 + i * 36.4) + .5;
    r += `<path d="M${x} 16v4M${x - 2} 19.500h4" stroke="#a6a8aa"/>`;
  }
  [['1',33],['1',283],['2',407],['3',531],['4',656],['5',781],['6',906]].forEach(([t, x]) => {
    r += `<text x="${x}" y="14" font-size="9" text-anchor="middle" fill="#a9abad">${t}</text>`;
  });
  r += '<path d="M153.500 3.500h10v3l-4 5 4 5v3h-10v-3l4-5-4-5zM873.500 20.500v-4l5-4.500 5 4.500v4z" fill="#fdfefe" stroke="#9b9d9f"/>';
  el('ruler').innerHTML = r;

  const names = {s:'ship',a:'amb',g:'gift',e:'ear',t:'star',d:'shield',m:'mount',k:'check',o:'circle',r:'train',c:'castle',h:'house',f:'golf',q:'ques',b:'boat','!':'excl',u:'bus',i:'info',y:'bee',M:'museum',T:'metro',x:'x',Q:'square',n:'noentry',R:'ribbon',C:'checker',B:'beach',K:'bike',H:'homes',S:'snake',P:'car'};
  const row = (line) => `<div class="flex h-[27px] items-center justify-between">` + line.split(' ').map(w =>
    `<span class="flex">` + [...w].map(c =>
      `<svg class="${c === '!' ? 'h-[21px] w-3' : 'size-[21px]'} shrink-0" fill="currentColor"><use href="#g-${names[c]}"/></svg>`).join('') + `</span>`).join('') + `</div>`;
  el('boxed').innerHTML = ['sag etd mko kod rag cgkhg fkq ko btd','!ko fab uiqagd ktbog io k qyiuu io rag','MTtu crxgk! kod ag akd Qbog giQarnR','ubTx dknq obf firabTr rkyioQ k uiqaC','Bo rag uixqr ubxrn dknq k Kbn akd Kggo'].map(row).join('');
  el('rest').innerHTML = ['fira ai!C HTr kurgx ubxrn dknq firabTr','k uiqa rag KbnSq Pkxgorq akd rbtd ai!'].map(row).join('');
</script>
</body>
</html>
